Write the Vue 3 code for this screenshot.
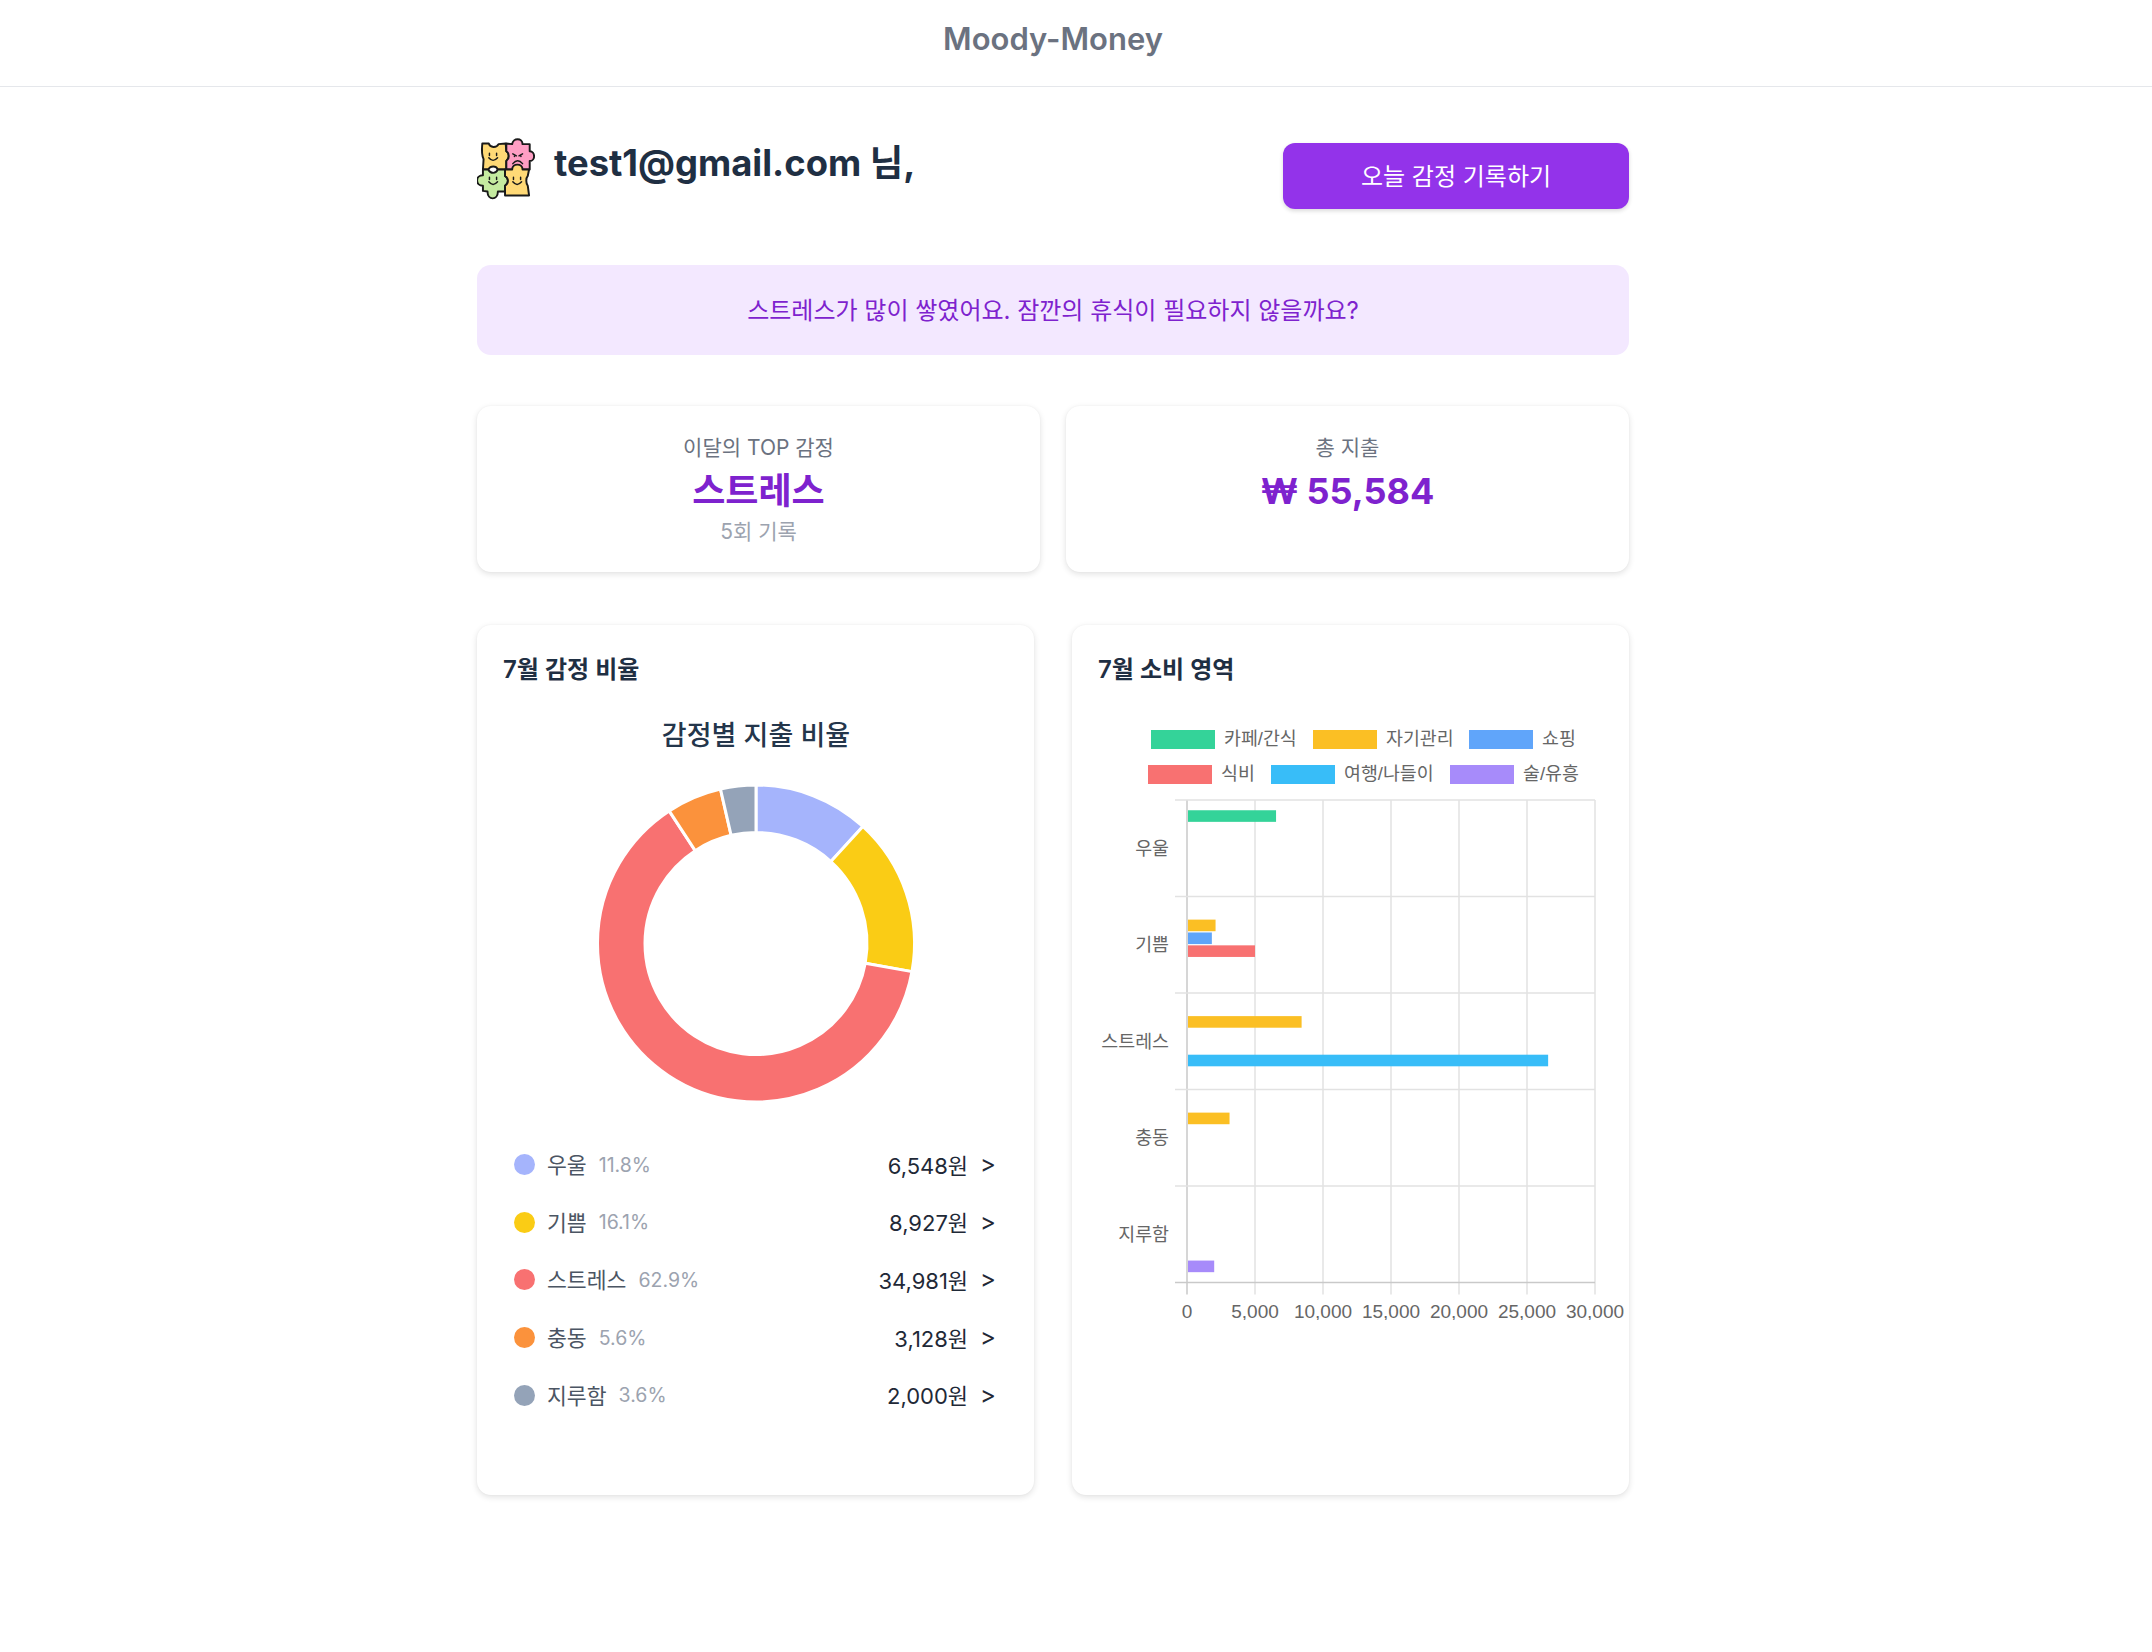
<script setup>
const emotions = [
  { name: '우울', pct: '11.8%', value: 6548, color: '#a5b4fc' },
  { name: '기쁨', pct: '16.1%', value: 8927, color: '#facc15' },
  { name: '스트레스', pct: '62.9%', value: 34981, color: '#f87171' },
  { name: '충동', pct: '5.6%', value: 3128, color: '#fb923c' },
  { name: '지루함', pct: '3.6%', value: 2000, color: '#94a3b8' }
]

const total = emotions.reduce((sum, e) => sum + e.value, 0)
const cx = 279
const cy = 243.5
const outer = 158.5
const inner = 111

const point = (r, a) => `${(cx + r * Math.sin(a)).toFixed(2)} ${(cy - r * Math.cos(a)).toFixed(2)}`

let acc = 0
const slices = emotions.map((e) => {
  const a0 = (acc / total) * Math.PI * 2
  acc += e.value
  const a1 = (acc / total) * Math.PI * 2
  const big = a1 - a0 > Math.PI ? 1 : 0
  return {
    color: e.color,
    d: `M${point(outer, a0)} A${outer} ${outer} 0 ${big} 1 ${point(outer, a1)} L${point(inner, a1)} A${inner} ${inner} 0 ${big} 0 ${point(inner, a0)} Z`
  }
})

const categories = [
  { id: '카페/간식', color: '#34d399', swatch: 79, row: 0 },
  { id: '자기관리', color: '#fbbf24', swatch: 241, row: 0 },
  { id: '쇼핑', color: '#60a5fa', swatch: 397, row: 0 },
  { id: '식비', color: '#f87171', swatch: 76, row: 1 },
  { id: '여행/나들이', color: '#38bdf8', swatch: 199, row: 1 },
  { id: '술/유흥', color: '#a78bfa', swatch: 378, row: 1 }
]

// 감정별 [카테고리 인덱스, 금액]
const spending = [
  [[0, 6548]],
  [[1, 2100], [2, 1827], [3, 5000]],
  [[1, 8427], [4, 26554]],
  [[1, 3128]],
  [[5, 2000]]
]

const plotLeft = 115
const plotRight = 523
const plotTop = 100
const band = 96.5
const ticks = [0, 5000, 10000, 15000, 20000, 25000, 30000]
const tickX = (v) => plotLeft + (v / 30000) * (plotRight - plotLeft)
const plotBottom = plotTop + band * 5

const bars = spending.flatMap((rows, i) =>
  rows.map(([cat, value]) => ({
    x: plotLeft + 1,
    y: plotTop + i * band + band * 0.1 + cat * band * 0.1333 + 0.6,
    w: tickX(value) - plotLeft - 1,
    color: categories[cat].color
  }))
)
</script>

<template>
  <div class="page">
    <header class="topbar">Moody-Money</header>

    <main class="content">
      <section class="greeting">
        <div class="who">
          <svg class="logo" viewBox="50 48 178 194" width="58" height="63">
            <g stroke="#1a1a1a" stroke-width="6" stroke-linejoin="round">
              <path fill="#ffd976" d="M66 68 L86 68 C90 82 110 82 116 70 L138 68 L140 92 C150 98 150 115 140 122 L140 148 L114 148 C108 136 92 136 84 148 L68 148 L70 116 C64 104 64 88 66 68 Z" />
              <path fill="#ff9ec4" d="M140 68 L158 70 C160 50 190 50 190 70 L212 70 L212 92 C230 92 230 122 212 122 L212 148 L140 148 L140 122 C150 115 150 98 140 92 Z" />
              <path fill="#c5eba0" d="M68 148 L84 148 C92 162 108 162 114 148 L136 148 L136 168 C148 175 148 190 136 198 L136 216 L114 216 C114 244 82 244 82 216 L68 214 L68 198 C44 198 44 166 68 166 Z" />
              <path fill="#ffd976" d="M136 148 L158 148 C158 128 190 128 190 148 L210 148 L206 168 C200 175 200 190 206 198 L210 228 L136 228 L136 198 C148 190 148 175 136 168 Z" />
            </g>
            <g fill="none" stroke="#1a1a1a" stroke-width="4.5" stroke-linecap="round">
              <path d="M88 98v7M110 98v7M86 112Q99 128 113 112" />
              <path d="M160 100l11 6M190 100l-11 6M165 106v2M185 106v2M160 130Q175 112 190 130" />
              <path d="M88 172v7M110 172v7M86 186Q99 202 113 186" />
              <path d="M162 172v7M184 172v7M160 186Q173 202 187 186" />
            </g>
          </svg>
          <h1 class="email">test1@gmail.com 님,</h1>
        </div>
        <button class="record-btn">오늘 감정 기록하기</button>
      </section>

      <section class="banner">스트레스가 많이 쌓였어요. 잠깐의 휴식이 필요하지 않을까요?</section>

      <section class="stats">
        <div class="card stat">
          <div class="stat-label">이달의 TOP 감정</div>
          <div class="stat-main">스트레스</div>
          <div class="stat-sub">5회 기록</div>
        </div>
        <div class="card stat">
          <div class="stat-label">총 지출</div>
          <div class="stat-main">₩ 55,584</div>
        </div>
      </section>

      <section class="panels">
        <div class="card panel">
          <h2 class="panel-title">7월 감정 비율</h2>
          <svg class="donut" width="557" height="435" viewBox="0 0 557 435">
            <text x="279" y="45" text-anchor="middle" class="donut-title">감정별 지출 비율</text>
            <path v-for="s in slices" :key="s.color" :d="s.d" :fill="s.color" stroke="#fff" stroke-width="3" />
          </svg>
          <ul class="rows">
            <li v-for="e in emotions" :key="e.name" class="row">
              <span class="dot" :style="{ background: e.color }"></span>
              <span class="row-name">{{ e.name }}</span>
              <span class="row-pct">{{ e.pct }}</span>
              <span class="row-amount">{{ e.value.toLocaleString() }}원</span>
              <span class="row-arrow">&gt;</span>
            </li>
          </ul>
        </div>

        <div class="card panel">
          <h2 class="panel-title">7월 소비 영역</h2>
          <svg class="bars" width="557" height="620" viewBox="0 0 557 620">
            <g v-for="c in categories" :key="c.id">
              <rect :x="c.swatch" :y="c.row * 35 + 30" width="64" height="19" :fill="c.color" />
              <text :x="c.swatch + 73" :y="c.row * 35 + 45" class="chart-text legend-text">{{ c.id }}</text>
            </g>

            <line v-for="t in ticks" :key="t" :x1="tickX(t)" :x2="tickX(t)" :y1="plotTop" :y2="plotBottom + 12"
              :stroke="t === 0 ? '#c9c9c9' : '#e2e2e2'" stroke-width="1.5" />
            <line v-for="i in 6" :key="i" :x1="plotLeft - 12" :x2="plotRight" :y1="plotTop + (i - 1) * band" :y2="plotTop + (i - 1) * band"
              :stroke="i === 6 ? '#c9c9c9' : '#e2e2e2'" stroke-width="1.5" />

            <rect v-for="(b, i) in bars" :key="i" :x="b.x" :y="b.y" :width="b.w" height="11.6" :fill="b.color" />

            <text v-for="(e, i) in emotions" :key="e.name" :x="plotLeft - 18" :y="plotTop + i * band + band / 2 + 6.5"
              text-anchor="end" class="chart-text legend-text">{{ e.name }}</text>
            <text v-for="t in ticks" :key="'t' + t" :x="tickX(t)" :y="plotBottom + 35" text-anchor="middle"
              class="chart-text">{{ t.toLocaleString() }}</text>
          </svg>
        </div>
      </section>
    </main>
  </div>
</template>

<style scoped>
.page {
  width: 2106px;
  height: 1652px;
  font-family: Inter, "Noto Sans CJK KR", sans-serif;
  color: #1f2937;
}

.topbar {
  width: 2152px;
  box-sizing: border-box;
  height: 87px;
  padding-right: 46px;
  border-bottom: 1px solid #e5e7eb;
  text-align: center;
  line-height: 78px;
  font-size: 31px;
  font-weight: 600;
  color: #6b7280;
}

.content {
  width: 1152px;
  margin: 0 auto;
  padding-top: 50px;
}

.greeting {
  display: flex;
  justify-content: space-between;
  align-items: flex-start;
  height: 72px;
  margin-bottom: 56px;
}

.who {
  display: flex;
  align-items: flex-start;
  gap: 19px;
}

.logo {
  display: block;
}

.email {
  margin: 0;
  font-size: 36.4px;
  font-weight: 700;
  line-height: 53px;
  color: #1f2f43;
}

.record-btn {
  width: 346px;
  height: 66px;
  margin-top: 6px;
  padding: 0 0 4px;
  border: none;
  border-radius: 12px;
  background: #9333ea;
  color: #fff;
  font-family: inherit;
  font-size: 24px;
  box-shadow: 0 2px 4px rgba(0, 0, 0, 0.15);
}

.banner {
  height: 90px;
  margin-bottom: 51px;
  border-radius: 14px;
  background: #f3e8ff;
  color: #7e22ce;
  font-size: 24px;
  line-height: 92px;
  text-align: center;
}

.card {
  background: #fff;
  border-radius: 14px;
  box-shadow: 0 2px 6px rgba(0, 0, 0, 0.12), 0 0 2px rgba(0, 0, 0, 0.04);
}

.stats {
  display: grid;
  grid-template-columns: 563px 563px;
  gap: 26px;
  margin-bottom: 53px;
}

.stat {
  height: 166px;
  box-sizing: border-box;
  padding-top: 25px;
  text-align: center;
}

.stat-label {
  font-size: 21px;
  line-height: 34px;
  color: #6b7280;
}

.stat-main {
  font-size: 36px;
  font-weight: 700;
  line-height: 52px;
  color: #7e22ce;
}

.stat-sub {
  font-size: 21px;
  line-height: 30px;
  color: #9ca3af;
}

.panels {
  display: grid;
  grid-template-columns: 557px 557px;
  gap: 38px;
}

.panel {
  height: 870px;
}

.panel-title {
  margin: 0;
  height: 75px;
  box-sizing: border-box;
  padding: 28px 25px 0 26px;
  font-size: 24px;
  font-weight: 600;
  line-height: 34px;
  color: #1f2f43;
}

.donut,
.bars {
  display: block;
}

.donut-title {
  font-size: 27px;
  font-weight: 500;
  fill: #24364b;
}

.chart-text {
  font-family: "Liberation Sans", "Noto Sans CJK KR", sans-serif;
  font-size: 19px;
  fill: #666;
}

.legend-text {
  font-size: 18.4px;
}

.rows {
  list-style: none;
  margin: 0;
  padding: 1px 38px 0 37px;
}

.row {
  display: flex;
  align-items: center;
  height: 57.6px;
}

.dot {
  width: 21px;
  height: 21px;
  border-radius: 50%;
  margin-right: 12px;
}

.row-name {
  margin-top: -2px;
  font-size: 21.6px;
  color: #4b5563;
}

.row-pct {
  margin-left: 12px;
  font-size: 19.5px;
  color: #9ca3af;
}

.row-amount {
  margin-top: -2px;
  margin-left: auto;
  font-size: 22px;
  font-weight: 400;
  color: #1f2937;
}

.row-arrow {
  margin-top: -2px;
  margin-left: 12px;
  font-size: 24px;
  color: #1f2937;
}
</style>
